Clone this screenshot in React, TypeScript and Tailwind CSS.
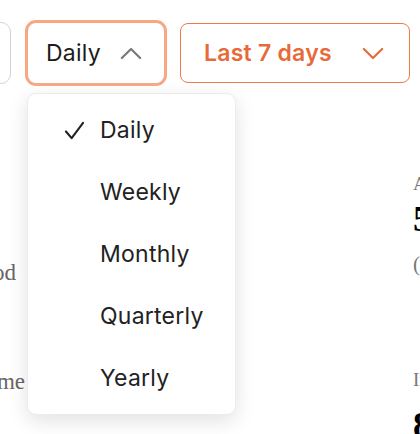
import { useState } from "react";

const options = ["Daily", "Weekly", "Monthly", "Quarterly", "Yearly"];

const ChevronUp = ({ className }: { className?: string }) => (
  <svg viewBox="0 0 24 14" fill="none" className={className}>
    <path d="M2 12 L12 2 L22 12" stroke="currentColor" strokeWidth="2.4" strokeLinecap="round" strokeLinejoin="round" />
  </svg>
);

const ChevronDown = ({ className }: { className?: string }) => (
  <svg viewBox="0 0 24 14" fill="none" className={className}>
    <path d="M2 2 L12 12 L22 2" stroke="currentColor" strokeWidth="2.4" strokeLinecap="round" strokeLinejoin="round" />
  </svg>
);

const Check = ({ className }: { className?: string }) => (
  <svg viewBox="0 0 22 20" fill="none" className={className}>
    <path d="M2 11 L8 18 L20 2" stroke="currentColor" strokeWidth="2.2" strokeLinecap="round" strokeLinejoin="round" />
  </svg>
);

export default function App() {
  const [selected, setSelected] = useState("Daily");

  return (
    <div className="relative w-[420px] h-[434px] overflow-hidden bg-white font-['Liberation_Serif',serif]">
      {/* page behind the menu */}
      <div className="flex h-full">
        <div className="-ml-[44px] w-[80px] shrink-0 pt-[259px] text-[23px] leading-[28px] text-[#666] whitespace-nowrap">
          <div>Period</div>
          <div className="mt-[81px]">Uptime</div>
        </div>
        <div className="flex-1" />
        <div className="w-[7px] shrink-0 pt-[172px] whitespace-nowrap">
          <div className="text-[19px] text-[#777] leading-[24px]">Average</div>
          <div className="text-[36px] font-bold text-black leading-[44px] mt-[1px]">5.2</div>
          <div className="text-[21px] text-[#777] leading-[28px] mt-[9px]">(+4%)</div>
          <div className="text-[19px] text-[#777] leading-[24px] mt-[90px]">Increase</div>
          <div className="text-[36px] font-bold text-black leading-[44px] mt-[11px]">8.1</div>
        </div>
      </div>

      {/* controls */}
      <div className="absolute left-0 top-0 w-full pt-[20px] font-['Inter',sans-serif] tracking-[0.015em]">
        <div className="flex items-center">
          <div className="-ml-[40px] w-[51px] h-[62px] rounded-[10px] border border-[#d4d4d4] bg-white shrink-0" />
          <button className="ml-[14px] w-[142px] h-[66px] shrink-0 rounded-[11px] border-[3px] border-[#f5a883] bg-white flex items-center pl-[18px] pr-[22px] text-[23px] text-[#1c1c1c]">
            <span>Daily</span>
            <ChevronUp className="ml-auto w-[22px] h-[13px] text-[#7a7a7a]" />
          </button>
          <button className="ml-[13px] w-[230px] h-[60px] shrink-0 rounded-[8px] border-[1.5px] border-[#ec7b4c] bg-white flex items-center pl-[23px] pr-[25px] text-[23px] font-semibold text-[#e76a3a]">
            <span>Last 7 days</span>
            <ChevronDown className="ml-auto w-[22px] h-[13px] text-[#e76a3a]" />
          </button>
        </div>

        <div className="ml-[27px] mt-[7px] w-[209px] rounded-[9px] border border-[#ececec] bg-white py-[5px] shadow-[0_6px_20px_rgba(0,0,0,0.12)]">
          {options.map((opt) => (
            <div
              key={opt}
              onClick={() => setSelected(opt)}
              className="h-[62px] flex items-center text-[23px] text-[#222]"
            >
              <div className="w-[72px] shrink-0 flex pl-[36px]">
                {selected === opt && <Check className="w-[21px] h-[19px] text-[#222]" />}
              </div>
              <span>{opt}</span>
            </div>
          ))}
        </div>
      </div>
    </div>
  );
}
